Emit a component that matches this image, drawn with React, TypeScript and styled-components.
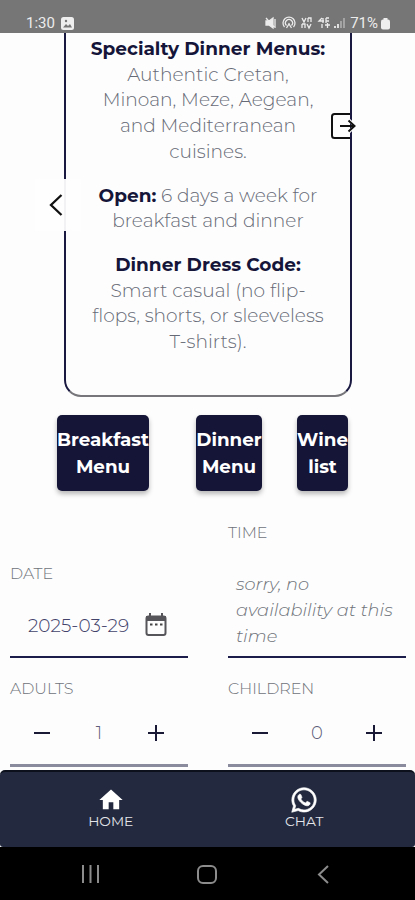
import React from 'react';
import styled, { createGlobalStyle } from 'styled-components';
import { MdHome } from 'react-icons/md';
import { FaWhatsapp } from 'react-icons/fa';

const GlobalStyle = createGlobalStyle`
  *, *::before, *::after { box-sizing: border-box; }
  body { margin: 0; background: #fdfdfd; }
  button { border: 0; padding: 0; background: none; font: inherit; color: inherit; }
`;

const Screen = styled.div`
  display: flex;
  flex-direction: column;
  width: 415px;
  height: 900px;
  overflow: hidden;
  background: #fdfdfd;
  color: #666a76;
  font-family: Montserrat, Inter, sans-serif;
`;

const StatusBar = styled.header`
  flex: none;
  display: flex;
  justify-content: space-between;
  height: 33px;
  padding: 14px 25px 0 26px;
  background: #767676;
  color: #ececec;
  font-family: Roboto, sans-serif;
  font-size: 15px;
  line-height: 18px;
`;

const StatusGroup = styled.div<{ $gap: number }>`
  display: flex;
  align-items: center;
  height: 18px;
  gap: ${(p) => p.$gap}px;
  svg { display: block; flex: none; }
`;

const Content = styled.main`
  flex: 1;
  min-height: 0;
  display: flex;
  flex-direction: column;
`;

const Card = styled.section`
  position: relative;
  flex: none;
  width: 288px;
  height: 364px;
  margin-left: 64px;
  padding-top: 3px;
  border: 2px solid #191942;
  border-top: 0;
  border-bottom: 2px solid #77777b;
  border-radius: 0 0 17px 17px;
  text-align: center;
`;

const Paragraph = styled.p`
  margin: 0 0 18px;
  font-size: 18.6px;
  font-weight: 300;
  line-height: 25.7px;
`;

const Line = styled.span`
  display: block;
  white-space: nowrap;
`;

const Strong = styled.strong`
  color: #15153a;
  font-size: 18.5px;
  font-weight: 700;
`;

const Previous = styled.button`
  position: absolute;
  left: -31px;
  top: 146px;
  display: flex;
  align-items: center;
  justify-content: center;
  width: 46px;
  height: 52px;
  padding-right: 4px;
  background: rgba(254, 254, 254, 0.95);
`;

const Exit = styled.button`
  position: absolute;
  left: 264px;
  top: 78px;
  width: 28px;
  height: 30px;
  svg { display: block; }
`;

const MenuRow = styled.div`
  display: flex;
  margin: 18px 0 0 57px;
`;

const MenuButton = styled.button<{ $width: number; $after?: number }>`
  width: ${(p) => p.$width}px;
  height: 76px;
  margin-right: ${(p) => p.$after ?? 0}px;
  border-radius: 5px;
  background: #151538;
  box-shadow: 0 3px 5px rgba(0, 0, 0, 0.28);
  color: #fff;
  font-size: 18.3px;
  font-weight: 700;
  line-height: 27px;
  text-align: center;
`;

const MenuLabel = styled.span`
  display: flex;
  justify-content: center;
  white-space: nowrap;
`;

const Form = styled.form`
  display: grid;
  grid-template-columns: 178px 178px;
  grid-template-rows: 135px 109px;
  column-gap: 40px;
  margin: 32px 0 0 10px;
`;

const Field = styled.div<{ $muted?: boolean }>`
  display: flex;
  flex-direction: column;
  align-self: end;
  border-bottom: ${(p) => (p.$muted ? '3px solid #8b8b9e' : '2px solid #1d1d4b')};
`;

const Label = styled.label`
  display: block;
  height: 20px;
  color: #6f737a;
  font-size: 15.9px;
  font-weight: 300;
  line-height: 20px;
`;

const DateRow = styled.div`
  display: flex;
  align-items: center;
  justify-content: space-between;
  height: 40px;
  margin: 21px 21px 11px 18px;
  color: #42426a;
  font-size: 18.5px;
  font-weight: 300;
`;

const Unavailable = styled.div`
  height: 78px;
  margin: 28px 0 7px 8px;
  color: #6f737a;
  font-size: 17.8px;
  font-weight: 300;
  font-style: italic;
  line-height: 26px;
`;

const Stepper = styled.div`
  display: flex;
  align-items: center;
  justify-content: space-between;
  height: 44px;
  margin: 12px 24px 9px;
  color: #5e5e7a;
  font-size: 18px;
  font-weight: 300;
  button { display: flex; color: #191936; }
`;

const Footer = styled.nav`
  flex: none;
  height: 77px;
  background: #fdfdfd;
`;

const FooterInner = styled.div`
  display: flex;
  height: 77px;
  padding: 0 14px;
  border-top: 2px solid #0b101c;
  border-radius: 5px 5px 3px 3px;
  background: #232a3f;
`;

const Tab = styled.a`
  flex: 1;
  display: flex;
  flex-direction: column;
  align-items: center;
  padding-top: 14px;
  color: #fff;
`;

const ChatIcon = styled(FaWhatsapp)`
  stroke: #fff;
  stroke-width: 12px;
`;

const TabLabel = styled.span`
  margin-top: -2px;
  color: #e3e5eb;
  font-size: 13.8px;
  font-weight: 400;
  line-height: 18px;
`;

const SystemBar = styled.footer`
  flex: none;
  display: flex;
  justify-content: space-between;
  align-items: center;
  height: 53px;
  padding: 1px 86px 0 81px;
  background: #000;
`;

const Count = ({ value }: { value: number }) => (
  <Stepper>
    <button type="button" aria-label="Decrease">
      <svg width="16" height="16"><path d="M0 8H16" stroke="currentColor" strokeWidth="2" /></svg>
    </button>
    {value}
    <button type="button" aria-label="Increase">
      <svg width="16" height="16"><path d="M0 8H16M8 0V16" stroke="currentColor" strokeWidth="2" /></svg>
    </button>
  </Stepper>
);

const StatusIcons = () => (
  <svg width="82" height="14" viewBox="0 0 82 14" fill="none" stroke="#ececec" strokeWidth="1.3">
    <path d="M1 5H4L8 2V12L4 9H1Z" fill="#ececec" />
    <path d="M1 2L9 11M10 3V12" />
    <path d="M19.500 11A6 6 0 1 1 28.500 11M21.500 9.500A3.500 3.500 0 1 1 26.500 9.500M24 7V9M21.500 12L24 8L26.500 12" />
    <path d="M37 2L39 6L41 2M43 2V6M43 2H46V6M37 8V12M37 8H40V12M42 8L44 12L46 8" />
    <path d="M57 2L54 5H59M58 2V7M61 2H64M61 2V7M61 5H64M57 8V12M60 9H65M62.500 7V12" />
    <path d="M70 12V10M73 12V8" strokeWidth="1.8" />
    <path d="M76 12V5M79 12V2" stroke="#b0b0b0" strokeWidth="1.6" />
  </svg>
);

export default function App() {
  return (
    <>
      <GlobalStyle />
      <Screen>
        <StatusBar>
          <StatusGroup $gap={6}>
            <span>1:30</span>
            <svg width="13" height="13" viewBox="0 0 13 13">
              <rect width="13" height="13" rx="2.500" fill="#eee" />
              <path d="M2 10.500L5 7L7 9L9 7L11 10.500Z" fill="#767676" />
              <circle cx="5" cy="4" r="1.200" fill="#767676" />
            </svg>
          </StatusGroup>
          <StatusGroup $gap={3}>
            <StatusIcons />
            <span>71%</span>
            <svg width="9" height="13" viewBox="0 0 9 13">
              <rect x="2.500" y="1" width="4" height="3" fill="#eee" />
              <rect y="2.500" width="9" height="10" rx="2" fill="#eee" />
            </svg>
          </StatusGroup>
        </StatusBar>

        <Content>
          <Card>
            <Paragraph>
              <Line><Strong>Specialty Dinner Menus:</Strong></Line>
              <Line>Authentic Cretan,</Line>
              <Line>Minoan, Meze, Aegean,</Line>
              <Line>and Mediterranean</Line>
              <Line>cuisines.</Line>
            </Paragraph>
            <Paragraph>
              <Line><Strong>Open:</Strong> 6 days a week for</Line>
              <Line>breakfast and dinner</Line>
            </Paragraph>
            <Paragraph>
              <Line><Strong>Dinner Dress Code:</Strong></Line>
              <Line>Smart casual (no flip-</Line>
              <Line>flops, shorts, or sleeveless</Line>
              <Line>T-shirts).</Line>
            </Paragraph>
            <Previous type="button" aria-label="Previous">
              <svg width="14" height="24" viewBox="0 0 14 24" fill="none">
                <path d="M12.500 2L2 12L12.500 22" stroke="#111" strokeWidth="2.300" />
              </svg>
            </Previous>
            <Exit type="button" aria-label="Exit">
              <svg width="28" height="30" viewBox="0 0 28 30" fill="none">
                <path d="M18 8L25 15L18 22" stroke="#fdfdfd" strokeWidth="3" />
                <path d="M20 3H4.500Q2 3 2 5.500V24.500Q2 27 4.500 27H20" stroke="#111" strokeWidth="2" />
                <path d="M10 15H24M18.500 9.500L24.500 15L18.500 20.500" stroke="#111" strokeWidth="2" />
              </svg>
            </Exit>
          </Card>

          <MenuRow>
            <MenuButton type="button" $width={92} $after={47}>
              <MenuLabel>Breakfast</MenuLabel>
              <MenuLabel>Menu</MenuLabel>
            </MenuButton>
            <MenuButton type="button" $width={66} $after={35}>
              <MenuLabel>Dinner</MenuLabel>
              <MenuLabel>Menu</MenuLabel>
            </MenuButton>
            <MenuButton type="button" $width={51}>
              <MenuLabel>Wine</MenuLabel>
              <MenuLabel>list</MenuLabel>
            </MenuButton>
          </MenuRow>

          <Form>
            <Field>
              <Label>DATE</Label>
              <DateRow>
                2025-03-29
                <svg width="22" height="24" viewBox="0 0 22 24" fill="none">
                  <rect x="1.500" y="3.500" width="19" height="18.500" rx="2" stroke="#55555a" strokeWidth="2" />
                  <path d="M1 3H21V8H1ZM4 0H6V4H4ZM16 0H18V4H16Z" fill="#55555a" />
                  <path d="M5 11.500H7.500M10 11.500H12.500M15 11.500H17.500" stroke="#444" strokeWidth="2" />
                </svg>
              </DateRow>
            </Field>
            <Field>
              <Label>TIME</Label>
              <Unavailable>
                <Line>sorry, no</Line>
                <Line>availability at this</Line>
                <Line>time</Line>
              </Unavailable>
            </Field>
            <Field $muted>
              <Label>ADULTS</Label>
              <Count value={1} />
            </Field>
            <Field $muted>
              <Label>CHILDREN</Label>
              <Count value={0} />
            </Field>
          </Form>
        </Content>

        <Footer>
          <FooterInner>
            <Tab>
              <MdHome size={28} />
              <TabLabel>HOME</TabLabel>
            </Tab>
            <Tab>
              <ChatIcon size={28} />
              <TabLabel>CHAT</TabLabel>
            </Tab>
          </FooterInner>
        </Footer>

        <SystemBar>
          <svg width="19" height="18"><path d="M2 0V18M9.500 0V18M17 0V18" stroke="#8c8c8c" strokeWidth="2" /></svg>
          <svg width="23" height="19" fill="none"><rect x="1" y="1" width="18" height="17" rx="5" stroke="#8c8c8c" strokeWidth="2" /></svg>
          <svg width="12" height="19" fill="none"><path d="M11 1L2 9.500L11 18" stroke="#8c8c8c" strokeWidth="2" /></svg>
        </SystemBar>
      </Screen>
    </>
  );
}
